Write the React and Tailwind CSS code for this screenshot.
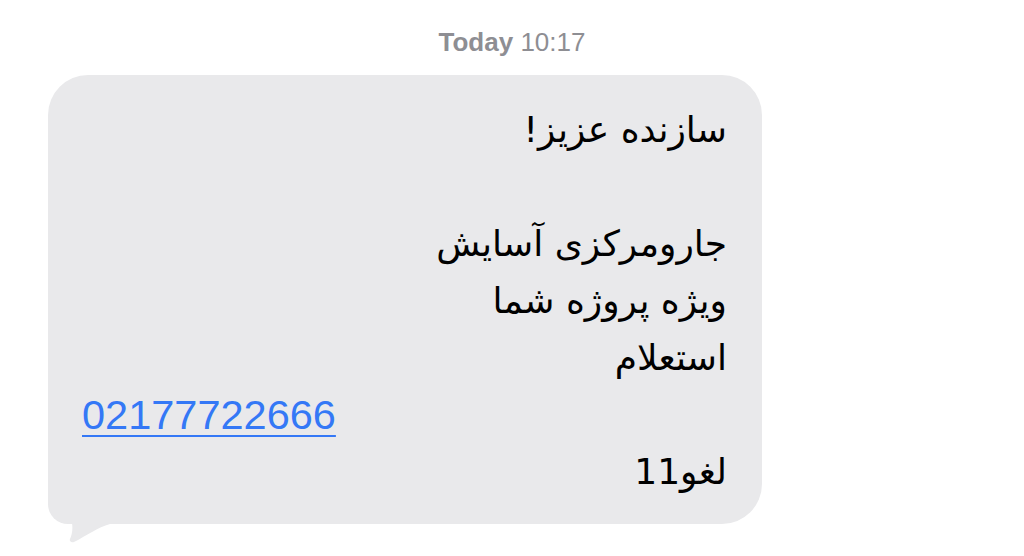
import React from 'react'

const lines = [
  { text: 'سازنده عزیز!' },
  { text: '' },
  { text: 'جارومرکزی آسایش' },
  { text: 'ویژه پروژه شما' },
  { text: 'استعلام' },
  { text: '02177722666', link: true },
  { text: 'لغو11' },
]

const App = () => {
  return (
    <div className="w-[1024px] h-[556px] bg-white overflow-hidden">
      <div className="pt-[27px] text-center text-[26px] leading-[30px] text-[#8e8e93] font-['Liberation_Sans',Arial,sans-serif]">
        <span className="font-bold">Today</span> 10:17
      </div>

      <div className="relative ml-[48px] mt-[18px] w-[714px]">
        {/* bubble tail */}
        <svg className="absolute left-0 top-[395px]" width="80" height="75" viewBox="0 0 80 75">
          <path
            d="M0 0 L0 20 C2 37, 12 47, 24 53 C25 59, 24 65, 22 69 C21 71, 23 73, 26 72 C38 66, 50 57, 62 54 L80 54 L80 0 Z"
            fill="#e9e9eb"
          />
        </svg>
        <div
          dir="rtl"
          className="relative rounded-[40px] rounded-bl-[20px] bg-[#e9e9eb] pt-[27px] pb-[23px] pr-[35px] pl-[34px] text-black text-[36px] leading-[56.5px] font-['DejaVu_Sans',sans-serif]"
        >
          {lines.map((l, i) =>
            l.link ? (
              <div key={i} dir="ltr" className="text-left h-[57px]">
                <a className="text-[#3478f6] underline decoration-2 underline-offset-[6px] text-[41.5px] font-['Liberation_Sans',Arial,sans-serif]">
                  {l.text}
                </a>
              </div>
            ) : (
              <div key={i} className="h-[57px]">{l.text}</div>
            )
          )}
        </div>
      </div>
    </div>
  )
}

export default App
